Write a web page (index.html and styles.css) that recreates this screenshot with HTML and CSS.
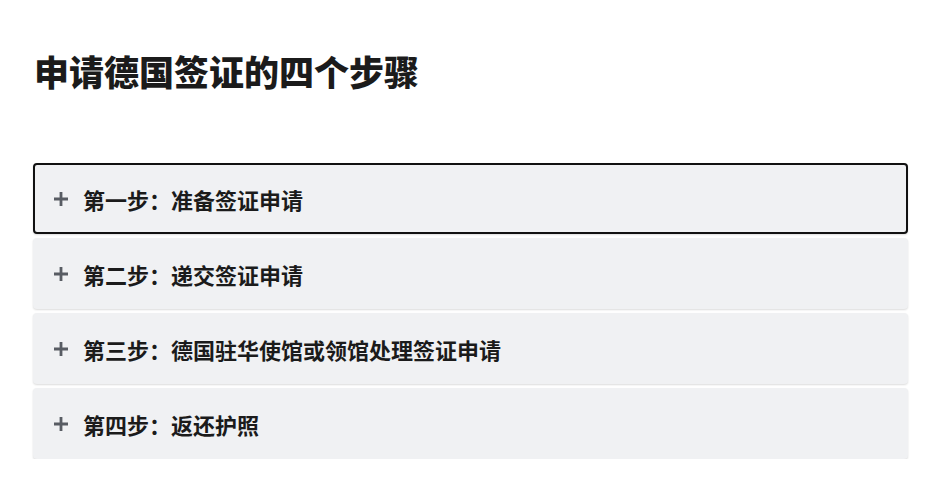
FILE: index.html
```html
<!DOCTYPE html>
<html lang="zh-CN">
<head>
<meta charset="UTF-8" />
<meta name="viewport" content="width=device-width, initial-scale=1.0"/>
<title>申请德国签证的四个步骤</title>
<link rel="stylesheet" href="styles.css">
</head>
<body>

<div class="page">
  <h1>申请德国签证的四个步骤</h1>

  <div class="steps">
    <button class="step focused">
      <svg class="plus" viewBox="0 0 16 16"><path d="M8 1v14M1 8h14"/></svg>
      <span>第一步：准备签证申请</span>
    </button>
    <button class="step">
      <svg class="plus" viewBox="0 0 16 16"><path d="M8 1v14M1 8h14"/></svg>
      <span>第二步：递交签证申请</span>
    </button>
    <button class="step">
      <svg class="plus" viewBox="0 0 16 16"><path d="M8 1v14M1 8h14"/></svg>
      <span>第三步：德国驻华使馆或领馆处理签证申请</span>
    </button>
    <button class="step">
      <svg class="plus" viewBox="0 0 16 16"><path d="M8 1v14M1 8h14"/></svg>
      <span>第四步：返还护照</span>
    </button>
  </div>
</div>

</body>
</html>
```

FILE: styles.css
```css
:root {
  --card-bg: #f0f1f3;
  --text: #1b1b1b;
  --icon: #585c63;
}

body {
  margin: 0;
  background: #fff;
  color: var(--text);
  font-family: "Noto Sans CJK SC", "Noto Sans", sans-serif;
}

.page {
  padding: 41px 20px 0 33px;
}

h1 {
  margin: 0 0 62px 1px;
  font-size: 35px;
  font-weight: 800;
  line-height: 60px;
}

.steps {
  display: flex;
  flex-direction: column;
  gap: 4px;
}

.step {
  display: flex;
  align-items: center;
  gap: 14px;
  height: 71px;
  padding: 0 18px;
  background: var(--card-bg);
  border: 2px solid transparent;
  border-radius: 4px;
  box-shadow: 0 1px 2px rgba(0,0,0,0.14);
  font-family: inherit;
  font-size: 22px;
  font-weight: 700;
  color: var(--text);
  text-align: left;
  cursor: pointer;
}

.step.focused {
  border-color: #111;
}

.plus {
  width: 16px;
  height: 16px;
  flex: none;
  stroke: var(--icon);
  stroke-width: 2.8;
  fill: none;
}
```
